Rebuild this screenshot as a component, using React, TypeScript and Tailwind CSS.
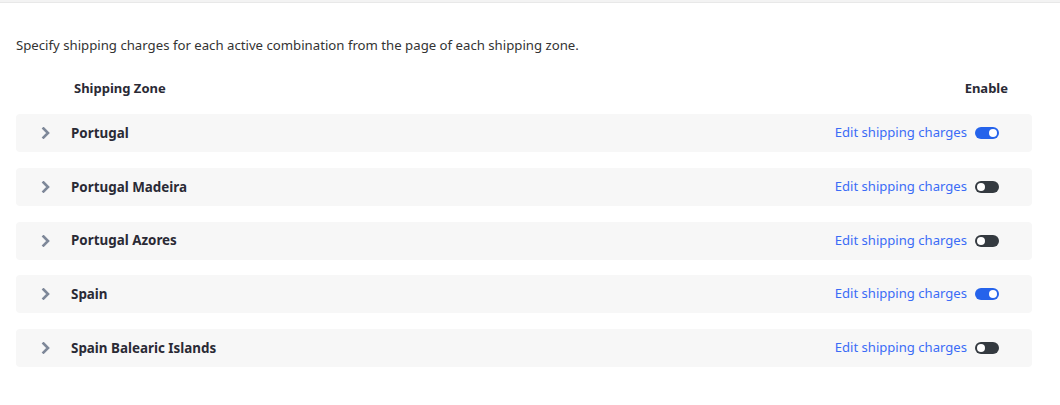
import React from "react";

const zones = [
  { name: "Portugal", on: true },
  { name: "Portugal Madeira", on: false },
  { name: "Portugal Azores", on: false },
  { name: "Spain", on: true },
  { name: "Spain Balearic Islands", on: false },
];

function Chevron() {
  return (
    <svg width="10" height="12" viewBox="0 0 10 12" className="shrink-0">
      <path d="M2.5 1.5 L7 6 L2.5 10.5" fill="none" stroke="#7e8899" strokeWidth="2.6" strokeLinecap="square" />
    </svg>
  );
}

function Toggle({ on }: { on: boolean }) {
  return (
    <div
      className={`w-[24px] h-[12px] rounded-full flex items-center px-[2px] ${on ? "bg-[#2563eb] justify-end" : "bg-[#343a40] justify-start"}`}
    >
      <div className="w-[8px] h-[8px] rounded-full bg-white" />
    </div>
  );
}

export default function App() {
  return (
    <div className="w-[1060px] h-[405px] bg-white font-['Noto_Sans',sans-serif] text-[#2b2b2b]">
      <div className="h-[3px] bg-[#f3f3f3] border-b border-[#e8e8e8]" />
      <div className="px-[16px] pr-[28px]">
        <p className="mt-[33px] text-[13.2px] leading-[18px] text-[#333]">
          Specify shipping charges for each active combination from the page of each shipping zone.
        </p>
        <div className="mt-[25px] flex items-center justify-between pl-[58px] pr-[24px] text-[13px] leading-[18px] font-bold text-[#2a2a35]">
          <span>Shipping Zone</span>
          <span>Enable</span>
        </div>
        <div className="mt-[17px] flex flex-col gap-[15.75px]">
          {zones.map((z) => (
            <div key={z.name} className="h-[38px] rounded-[4px] bg-[#f7f7f7] flex items-center pl-[25px] pr-[33px]">
              <Chevron />
              <span className="ml-[20px] text-[13.4px] font-bold text-[#2a2a35]">{z.name}</span>
              <span className="ml-auto text-[13.1px] text-[#3b6cf6]">Edit shipping charges</span>
              <div className="ml-[8px]">
                <Toggle on={z.on} />
              </div>
            </div>
          ))}
        </div>
      </div>
    </div>
  );
}
